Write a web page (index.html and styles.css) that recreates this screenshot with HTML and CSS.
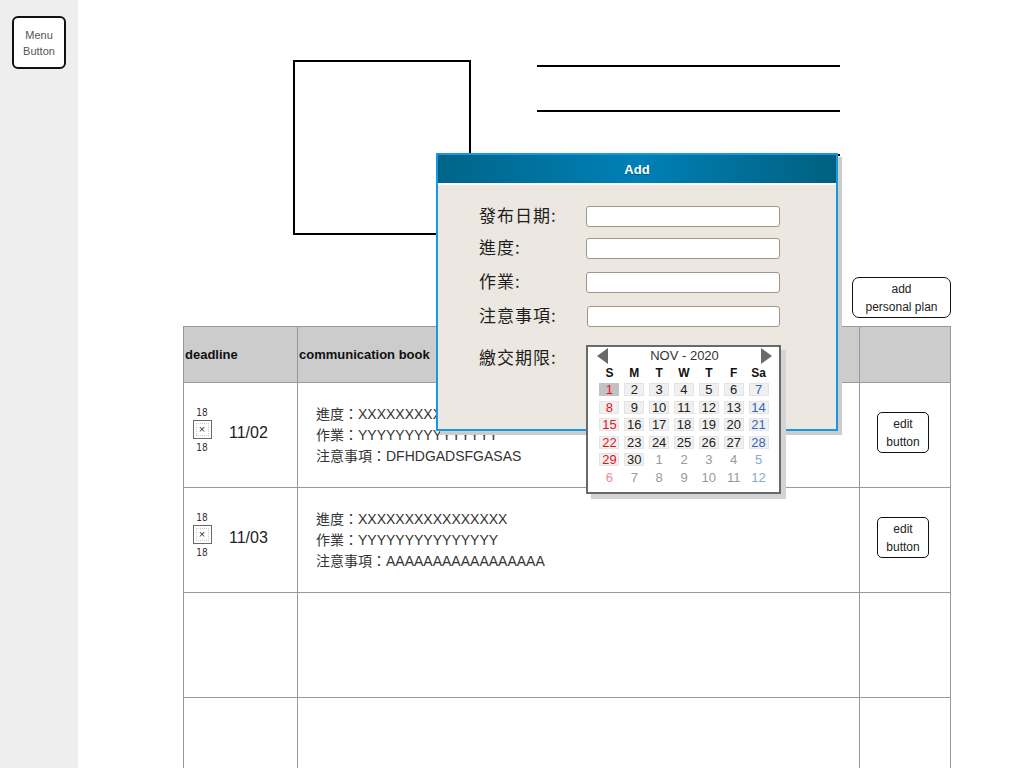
FILE: index.html
```html
<!DOCTYPE html>
<html lang="zh-Hant">
<head>
<meta charset="utf-8">
<title>Communication Book</title>
<link rel="stylesheet" href="styles.css">
</head>
<body>
<div class="app">
  <aside class="sidebar">
    <div class="menu-btn">Menu<br>Button</div>
  </aside>
  <main class="main">
    <section class="hero">
      <div class="photo"></div>
      <div class="lines">
        <div class="line"></div>
        <div class="line"></div>
        <div class="line"></div>
        <div class="line"></div>
      </div>
    </section>
    <div class="actions">
      <div class="add-btn">add<br>personal plan</div>
    </div>
    <table class="plan">
      <colgroup><col class="c1"><col class="c2"><col class="c3"></colgroup>
      <thead>
        <tr><th>deadline</th><th>communication book</th><th></th></tr>
      </thead>
      <tbody>
        <tr>
          <td class="dl">
            <div class="dl-wrap">
              <div class="stack"><span class="num">18</span><span class="xbox">×</span><span class="num">18</span></div>
              <span class="date">11/02</span>
            </div>
          </td>
          <td class="content">進度：XXXXXXXXXXXXXXXX<br>作業：YYYYYYYYYYYYYYY<br>注意事項：DFHDGADSFGASAS</td>
          <td class="act"><div class="edit-btn">edit<br>button</div></td>
        </tr>
        <tr>
          <td class="dl">
            <div class="dl-wrap">
              <div class="stack"><span class="num">18</span><span class="xbox">×</span><span class="num">18</span></div>
              <span class="date">11/03</span>
            </div>
          </td>
          <td class="content">進度：XXXXXXXXXXXXXXXX<br>作業：YYYYYYYYYYYYYYY<br>注意事項：AAAAAAAAAAAAAAAAA</td>
          <td class="act"><div class="edit-btn">edit<br>button</div></td>
        </tr>
        <tr><td></td><td></td><td></td></tr>
        <tr><td></td><td></td><td></td></tr>
      </tbody>
    </table>
  </main>
</div>

<div class="dialog">
  <div class="dialog-title">Add</div>
  <div class="form">
    <div class="label">發布日期:</div><div class="input"></div>
    <div class="label">進度:</div><div class="input"></div>
    <div class="label">作業:</div><div class="input"></div>
    <div class="label">注意事項:</div><div class="input shift"></div>
    <div class="label">繳交期限:</div>
    <div class="cal-anchor">
      <div class="calendar">
        <div class="cal-head">
          <svg width="11" height="16" viewBox="0 0 11 16"><polygon points="11,0 11,16 0,8" fill="#6a6a6a"/></svg>
          <span>NOV - 2020</span>
          <svg width="11" height="16" viewBox="0 0 11 16"><polygon points="0,0 0,16 11,8" fill="#6a6a6a"/></svg>
        </div>
        <div class="cal-dow">
          <span>S</span><span>M</span><span>T</span><span>W</span><span>T</span><span>F</span><span>Sa</span>
        </div>
        <div class="cal-grid">
          <span class="d sun sel">1</span><span class="d">2</span><span class="d">3</span><span class="d">4</span><span class="d">5</span><span class="d">6</span><span class="d sat">7</span>
          <span class="d sun">8</span><span class="d">9</span><span class="d">10</span><span class="d">11</span><span class="d">12</span><span class="d">13</span><span class="d sat">14</span>
          <span class="d sun">15</span><span class="d">16</span><span class="d">17</span><span class="d">18</span><span class="d">19</span><span class="d">20</span><span class="d sat">21</span>
          <span class="d sun">22</span><span class="d">23</span><span class="d">24</span><span class="d">25</span><span class="d">26</span><span class="d">27</span><span class="d sat">28</span>
          <span class="d sun">29</span><span class="d">30</span><span class="o">1</span><span class="o">2</span><span class="o">3</span><span class="o">4</span><span class="o sat">5</span>
          <span class="o sun">6</span><span class="o">7</span><span class="o">8</span><span class="o">9</span><span class="o">10</span><span class="o">11</span><span class="o sat">12</span>
        </div>
      </div>
    </div>
  </div>
</div>
</body>
</html>
```

FILE: styles.css
```css
* { box-sizing: border-box; }
html, body { margin: 0; height: 100%; overflow: hidden; }
body {
  font-family: "Liberation Sans", Arial, "Noto Sans CJK TC", sans-serif;
  background: #fff;
  color: #222;
  position: relative;
}
.app { display: flex; height: 768px; }

.sidebar {
  width: 78px;
  flex: none;
  background: #eeeeee;
  padding: 16px 0 0 12px;
}
.menu-btn {
  width: 54px;
  height: 53px;
  border: 2px solid #111;
  border-radius: 6px;
  background: #fff;
  font-size: 11px;
  line-height: 16px;
  color: #555;
  display: flex;
  align-items: center;
  justify-content: center;
  text-align: center;
}

.main { flex: 1; min-width: 0; }
.hero { display: flex; gap: 66px; padding: 60px 0 0 215px; }
.photo { width: 178px; height: 175px; border: 2px solid #000; flex: none; }
.lines { width: 303px; padding-top: 5px; display: flex; flex-direction: column; gap: 42.5px; }
.line { height: 2px; background: #000; }

.actions { display: flex; justify-content: flex-end; padding-right: 73px; margin-top: 42px; }
.add-btn, .edit-btn {
  border: 1px solid #111;
  background: #fff;
  display: flex;
  align-items: center;
  justify-content: center;
  text-align: center;
  font-size: 12px;
  line-height: 18px;
  color: #222;
}
.add-btn { width: 99px; height: 41px; border-radius: 7px; }
.edit-btn { width: 52px; height: 41px; border-radius: 5px; margin-left: 17px; }

.plan {
  margin: 8px 0 0 105px;
  width: 767px;
  border-collapse: collapse;
  table-layout: fixed;
}
.plan .c1 { width: 114px; }
.plan .c2 { width: 562px; }
.plan .c3 { width: 91px; }
.plan th, .plan td { border: 1px solid #999; padding: 0; }
.plan thead tr { height: 56px; }
.plan th {
  background: #cccccc;
  text-align: left;
  font-size: 13px;
  font-weight: bold;
  padding-left: 1px;
  color: #111;
}
.plan tbody tr { height: 105px; }

.dl-wrap { display: flex; align-items: center; padding: 0 0 9px 8px; }
.stack { display: flex; flex-direction: column; align-items: center; width: 20px; }
.num {
  font-family: "DejaVu Sans Condensed", "DejaVu Sans", sans-serif;
  font-stretch: condensed;
  font-size: 10px;
  line-height: 12px;
  color: #333;
}
.xbox {
  width: 19px;
  height: 19px;
  margin: 1px 0 3px;
  border: 1px solid #6a6a6a;
  outline: 1px dotted #c8c8c8;
  outline-offset: -4px;
  font-size: 11px;
  line-height: 17px;
  text-align: center;
  color: #333;
}
.date { margin: 5px 0 0 17px; font-size: 16px; color: #222; }

.content {
  padding-left: 18px !important;
  font-family: "Liberation Sans", Arial, "Noto Sans CJK TC", sans-serif;
  font-size: 14px;
  line-height: 21px;
  color: #333;
  vertical-align: middle;
}
.act { vertical-align: middle; padding-bottom: 5px !important; }

/* Dialog */
.dialog {
  position: absolute;
  left: 436px;
  top: 153px;
  width: 402px;
  height: 278px;
  border: 2px solid #159ae2;
  background: #ece7e1;
  box-shadow: 4px 4px 0 #cccccc;
}
.dialog-title {
  height: 30px;
  border-bottom: 2px solid #fff;
  background: linear-gradient(90deg, #006489 0%, #0080b6 50%, #00607f 100%);
  color: #fff;
  font-weight: bold;
  font-size: 13px;
  display: flex;
  align-items: center;
  justify-content: center;
  text-shadow: 0 1px 1px rgba(0, 0, 0, 0.35);
}
.form {
  display: grid;
  grid-template-columns: 107px 194px;
  grid-template-rows: 32px 34px 34px 41.5px 21px;
  padding: 21px 0 0 41px;
  align-items: start;
}
.label {
  font-family: "Noto Sans CJK TC", sans-serif;
  font-size: 17px;
  line-height: 18px;
  letter-spacing: 1px;
  color: #1e1e1e;
}
.input {
  height: 21px;
  background: #fff;
  border: 1px solid #a39584;
  border-radius: 3px;
}
.input.shift { margin-left: 1px; }

.cal-anchor { position: relative; height: 21px; }
.calendar {
  position: absolute;
  left: 0;
  top: -2.5px;
  width: 195px;
  height: 149px;
  border: 2px solid #696969;
  background: #fff;
  box-shadow: 5px 5px 0 #d4d4d4;
  z-index: 2;
}
.cal-head {
  display: flex;
  justify-content: space-between;
  align-items: center;
  height: 17px;
  padding: 0 7px 0 9px;
  font-size: 13px;
  color: #333;
}
.cal-head svg { display: block; }
.cal-dow, .cal-grid {
  display: grid;
  grid-template-columns: repeat(7, 1fr);
  padding: 0 8px 0 9px;
  justify-items: center;
  align-items: center;
}
.cal-dow { height: 17px; font-size: 12px; font-weight: bold; color: #111; }
.cal-grid { grid-auto-rows: 17.5px; font-size: 13px; }
.d {
  width: 20px;
  height: 13px;
  line-height: 11px;
  text-align: center;
  background: #f0f0f0;
  border: 1px solid #e4e4e4;
  color: #222;
}
.d.sel { background: #c2c2c2; border-color: #c2c2c2; }
.d.sun { color: #e3121c; }
.d.sat { color: #3465b8; }
.o { color: #999; line-height: 13px; }
.o.sun { color: #f08a8a; }
.o.sat { color: #88a6d8; }
```
